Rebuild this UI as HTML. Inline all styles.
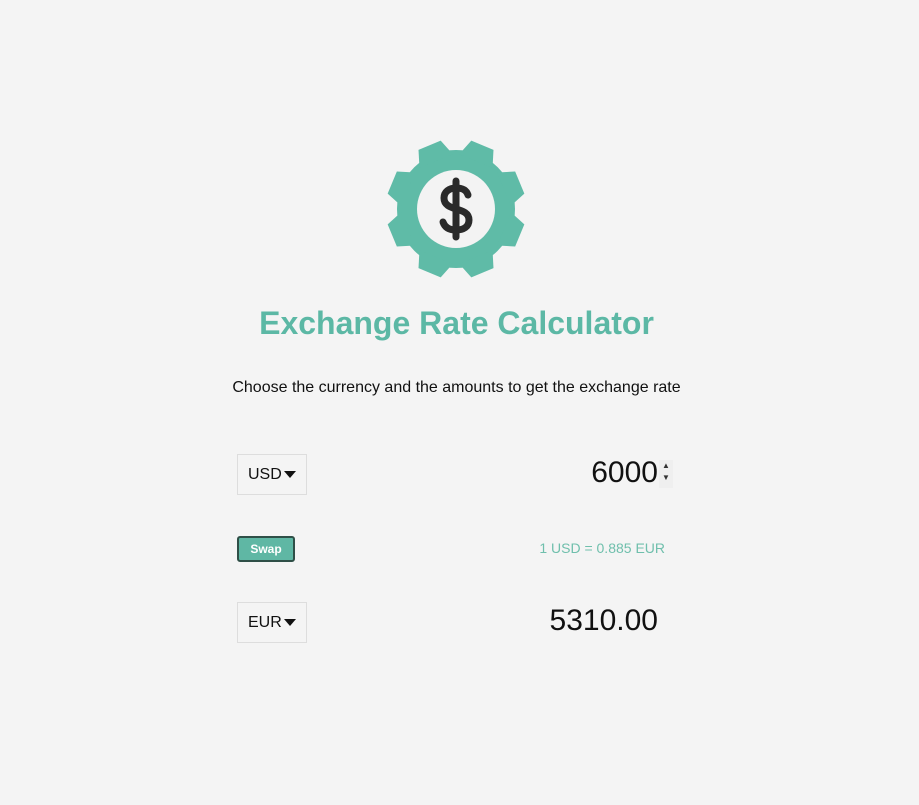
<!DOCTYPE html>
<html><head><style>
body{margin:0;background:#f4f4f4;font-family:"Liberation Sans",Arial,sans-serif;width:919px;height:805px;position:relative;overflow:hidden}
.a{position:absolute}
.sel{position:absolute;left:237px;width:70px;height:41px;border:1px solid #ddd;box-sizing:border-box;font-size:16px;line-height:39px;padding-left:10px;color:#111}
.tri{display:inline-block;width:0;height:0;border-left:6px solid transparent;border-right:6px solid transparent;border-top:7px solid #111;margin-left:2px;vertical-align:middle}
</style></head><body>
<svg class="a" style="left:380px;top:133px" width="152" height="152" viewBox="-76 -76 152 152">
<g fill="#5fbba7">
<circle r="59"/>
<path d="M-18,-52 L-12,-69 L12,-69 L18,-52 Z" transform="rotate(22.5)"/>
<path d="M-18,-52 L-12,-69 L12,-69 L18,-52 Z" transform="rotate(67.5)"/>
<path d="M-18,-52 L-12,-69 L12,-69 L18,-52 Z" transform="rotate(112.5)"/>
<path d="M-18,-52 L-12,-69 L12,-69 L18,-52 Z" transform="rotate(157.5)"/>
<path d="M-18,-52 L-12,-69 L12,-69 L18,-52 Z" transform="rotate(202.5)"/>
<path d="M-18,-52 L-12,-69 L12,-69 L18,-52 Z" transform="rotate(247.5)"/>
<path d="M-18,-52 L-12,-69 L12,-69 L18,-52 Z" transform="rotate(292.5)"/>
<path d="M-18,-52 L-12,-69 L12,-69 L18,-52 Z" transform="rotate(337.5)"/>
</g>
<circle r="39" fill="#f3f3f3"/>
<g fill="none" stroke="#2a2a2a" stroke-width="7" stroke-linecap="round" stroke-linejoin="round">
<path d="M12,-14 C10,-20 5,-21 0,-21 C-7,-21 -12,-17 -12,-11 C-12,-4 -6,-2 0,0 C7,2 13,4 13,11 C13,18 7,21 0,21 C-6,21 -11,19 -13,13"/>
<path d="M0,-28 L0,28"/>
</g>
</svg>
<div class="a" style="left:0;width:913px;top:305px;text-align:center;font-size:32px;font-weight:bold;color:#5cb8a5">Exchange Rate Calculator</div>
<div class="a" style="left:0;width:913px;top:379px;text-align:center;font-size:16px;color:#111">Choose the currency and the amounts to get the exchange rate</div>
<div class="sel" style="top:454px">USD<span class="tri"></span></div>
<div class="a" style="left:500px;width:158px;top:456px;text-align:right;font-size:30px;color:#111">6000</div>
<div class="a" style="left:659px;top:460px;width:14px;height:28px;background:#efefef;font-size:8px;line-height:12px;text-align:center;color:#333">▲<br>▼</div>
<div class="a" style="left:237px;top:536px;width:58px;height:26px;box-sizing:border-box;background:#5fb7a4;border:2px solid #2f4f47;border-radius:3px;color:#fff;font-size:12px;font-weight:bold;text-align:center;line-height:22px">Swap</div>
<div class="a" style="left:465px;width:200px;top:540px;text-align:right;font-size:14px;color:#6fbfac">1 USD = 0.885 EUR</div>
<div class="sel" style="top:602px">EUR<span class="tri"></span></div>
<div class="a" style="left:458px;width:200px;top:604px;text-align:right;font-size:30px;color:#111">5310.00</div>
</body></html>
